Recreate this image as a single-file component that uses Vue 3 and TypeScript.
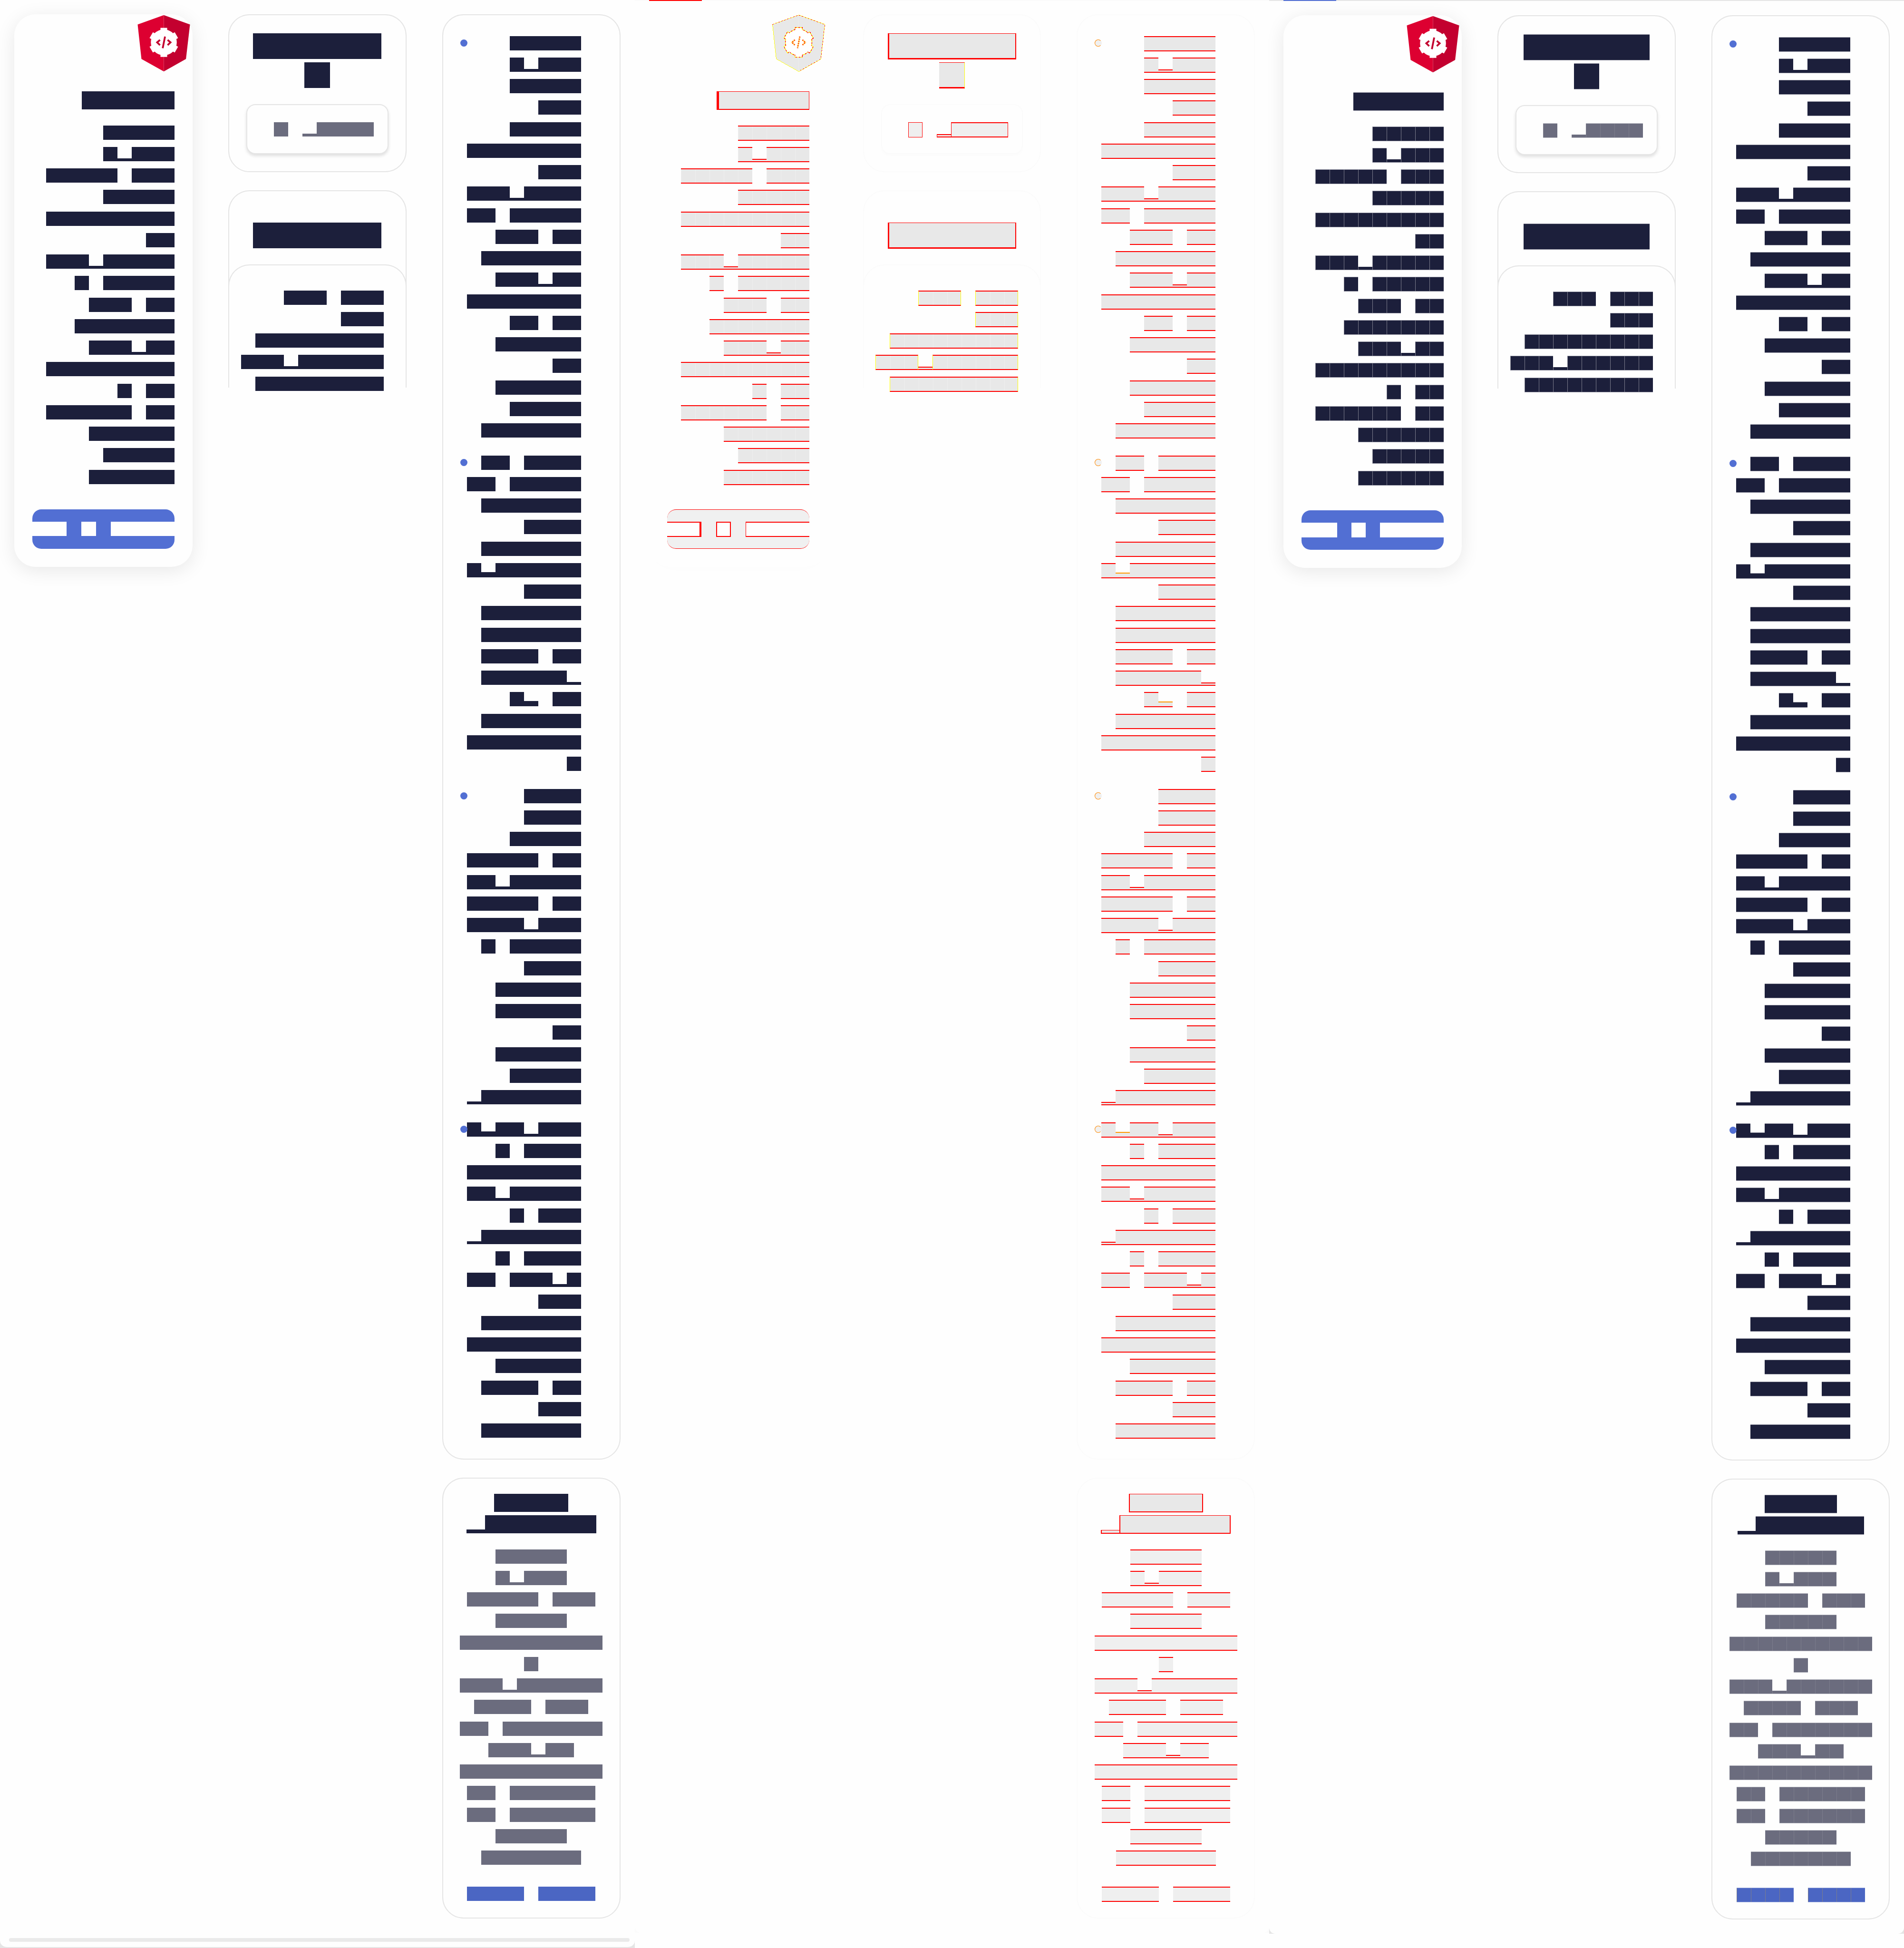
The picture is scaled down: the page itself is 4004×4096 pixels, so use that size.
<script setup lang="ts">
import { h } from 'vue'
import type { FunctionalComponent } from 'vue'

type Variant = 'before' | 'diff' | 'after'

interface Run {
  kind: 'full' | 'low' | 'mid' | 'space'
  count: number
}

const variants: Variant[] = ['before', 'diff', 'after']

// Glyph codes: X = full em box, p = low bar, c = taller bar, blank = empty em.
const kinds: Record<string, Run['kind']> = { X: 'full', p: 'low', c: 'mid', ' ': 'space' }

function toRuns(line: string): Run[] {
  return (line.match(/X+|p+|c+| +/g) ?? []).map((part) => ({
    kind: kinds[part[0]],
    count: part.length,
  }))
}

const BlockLines: FunctionalComponent<{ lines: string[] }> = (props) =>
  h(
    'span',
    { class: 'lines' },
    props.lines.map((line) =>
      h(
        'span',
        { class: 'line' },
        toRuns(line).map((run) => h('span', { class: ['run', run.kind], style: { '--n': run.count } })),
      ),
    ),
  )
BlockLines.props = ['lines']

const intro: string[] = [
  'XXXXX', 'XpXXX', 'XXXXX XXX', 'XXXXX', 'XXXXXXXXX', 'XX', 'XXXpXXXXX', 'X XXXXX', 'XXX XX',
  'XXXXXXX', 'XXXpXX', 'XXXXXXXXX', 'X XX', 'XXXXXX XX', 'XXXXXX', 'XXXXX', 'XXXXXX',
]

const nested: string[] = ['XXX XXX', 'XXX', 'XXXXXXXXX', 'XXXpXXXXXX', 'XXXXXXXXX']

const items: string[][] = [
  [
    'XXXXX', 'XpXXX', 'XXXXX', 'XXX', 'XXXXX', 'XXXXXXXX', 'XXX', 'XXXpXXXX', 'XX XXXXX', 'XXX XX',
    'XXXXXXX', 'XXXpXX', 'XXXXXXXX', 'XX XX', 'XXXXXX', 'XX', 'XXXXXX', 'XXXXX', 'XXXXXXX',
  ],
  [
    'XX XXXX', 'XX XXXXX', 'XXXXXXX', 'XXXX', 'XXXXXXX', 'XcXXXXXX', 'XXXX', 'XXXXXXX', 'XXXXXXX',
    'XXXX XX', 'XXXXXXp', 'Xc XX', 'XXXXXXX', 'XXXXXXXX', 'X',
  ],
  [
    'XXXX', 'XXXX', 'XXXXX', 'XXXXX XX', 'XXpXXXXX', 'XXXXX XX', 'XXXXpXXX', 'X XXXXX', 'XXXX',
    'XXXXXX', 'XXXXXX', 'XX', 'XXXXXX', 'XXXXX', 'pXXXXXXX',
  ],
  [
    'XcXXpXXX', 'X XXXX', 'XXXXXXXX', 'XXpXXXXX', 'X XXX', 'pXXXXXXX', 'X XXXX', 'XX XXXpX', 'XXX',
    'XXXXXXX', 'XXXXXXXX', 'XXXXXX', 'XXXX XX', 'XXX', 'XXXXXXX',
  ],
]

const summary: string[] = [
  'XXXXX', 'XpXXX', 'XXXXX XXX', 'XXXXX', 'XXXXXXXXXX', 'X', 'XXXpXXXXXX', 'XXXX XXX', 'XX XXXXXXX',
  'XXXpXX', 'XXXXXXXXXX', 'XX XXXXXX', 'XX XXXXXX', 'XXXXX', 'XXXXXXX',
]
</script>

<template>
  <main class="board">
    <section v-for="variant in variants" :key="variant" class="panel" :class="variant">
      <div class="sheet">
        <div class="tabline"><span class="tab"></span></div>
        <div class="columns">
          <div class="column">
            <article class="card feature">
              <svg class="logo" viewBox="0 0 118 127" aria-hidden="true">
                <path class="shield-left" d="M59 0.5 0.5 21.500 9 98.500 59 126.500z" />
                <path class="shield-right" d="M59 0.5 117.500 21.500 108.500 98.500 59 126.500z" />
                <template v-if="variant === 'diff'">
                  <path class="edge" d="M59 0.5 117.500 21.500 108.500 98.500 59 126.500 9 98.500 0.5 21.500z" />
                  <path class="edge dash" d="M0.5 21.500 59 0.5 117.500 21.500 108.500 98.500 59 126.500" />
                  <g class="gear-edge">
                    <circle cx="59" cy="61.500" r="29" />
                    <rect v-for="a in [0, 60, 120]" :key="a" x="51.500" y="29" width="15" height="65" :transform="`rotate(${a} 59 61.500)`" />
                  </g>
                  <g class="gear-edge dash">
                    <circle cx="59" cy="61.500" r="29" />
                    <rect v-for="a in [0, 60, 120]" :key="a" x="51.500" y="29" width="15" height="65" :transform="`rotate(${a} 59 61.500)`" />
                  </g>
                </template>
                <g class="gear">
                  <circle cx="59" cy="61.500" r="29" />
                  <rect v-for="a in [0, 60, 120]" :key="a" x="51.500" y="29" width="15" height="65" :transform="`rotate(${a} 59 61.500)`" />
                </g>
                <g class="code">
                  <path d="M50.500 56 44 61.500 50.500 67.500" />
                  <path d="M67.500 56 74 61.500 67.500 67.500" />
                  <path d="M61.700 48.500 56.500 74.500" />
                </g>
                <g v-if="variant === 'diff'" class="code dash">
                  <path d="M50.500 56 44 61.500 50.500 67.500" />
                  <path d="M67.500 56 74 61.500 67.500 67.500" />
                  <path d="M61.700 48.500 56.500 74.500" />
                </g>
              </svg>
              <h2 class="title"><BlockLines :lines="['XXXXX']" /></h2>
              <p class="text seams"><BlockLines :lines="intro" /></p>
              <button type="button" class="action" aria-label="Open">
                <BlockLines :lines="['XXX X XXXXX']" />
              </button>
            </article>
          </div>

          <div class="column">
            <article class="card picker">
              <h2 class="hero"><BlockLines :lines="['XXXXX', 'X']" /></h2>
              <button type="button" class="field seams" aria-label="Choose">
                <BlockLines :lines="['X pXXXX']" />
              </button>
            </article>
            <article class="card stack">
              <h2 class="hero"><BlockLines :lines="['XXXXX']" /></h2>
              <div class="nested seams"><BlockLines :lines="nested" /></div>
            </article>
          </div>

          <div class="column">
            <article class="card listing">
              <ul>
                <li v-for="(item, i) in items" :key="i"><BlockLines :lines="item" /></li>
              </ul>
            </article>
            <article class="card summary">
              <h2 class="title"><BlockLines :lines="['XXXX', 'pXXXXXX']" /></h2>
              <p class="text seams"><BlockLines :lines="summary" /></p>
              <a href="#more" class="more seams" aria-label="More"><BlockLines :lines="['XXXX XXXX']" /></a>
            </article>
          </div>
        </div>
        <div v-if="variant === 'before'" class="scrollbar"></div>
      </div>
    </section>
  </main>
</template>

<style>
body {
  margin: 0;
  background: #fefefe;
}
</style>

<style scoped>
.board {
  display: flex;
  align-items: flex-start;
  min-height: 100vh;
  overflow: hidden;
  font-family: "Liberation Sans", sans-serif;
}

.panel {
  --ink: #1c1f3b;
  --muted: #6b6c7e;
  --link: #4b66c3;
  --accent: #526fd3;
  --line: #e5e5e5;
  --edge: #e5e5e5;
  --em: 30px;
  --gh: 30px;
  --low: 6px;
  --mid: 11px;
  --title: 39px;
  --hero: 54px;
  flex: 1 1 0;
  min-width: 0;
  background: var(--edge);
}

.panel.diff {
  --ink: #e8e8e8;
  --muted: #efefef;
  --link: #efefef;
  --accent: #f0f0f0;
  --line: #fbfbfb;
  --edge: #fbfbfb;
  --gh: 32px;
  --low: 7px;
  --mid: 12px;
}

.panel.after {
  --gh: 31px;
  --low: 7px;
  --mid: 12px;
  --title: 38px;
  --hero: 53px;
}

.sheet {
  position: relative;
  display: flex;
  flex-direction: column;
  background: #fefefe;
  border-radius: 0 0 13px 13px;
}

.before .sheet {
  box-sizing: border-box;
  min-height: 100vh;
  border-bottom: 2px solid var(--edge);
  border-radius: 0 0 15px 15px;
}

.tabline {
  display: none;
}

.diff .tabline,
.after .tabline {
  display: block;
  height: 2px;
  background: var(--edge);
}

.diff .tabline {
  position: absolute;
  top: 0;
  left: 0;
  right: 0;
}

.tab {
  display: block;
  width: 111px;
  height: 2px;
  margin-left: 30px;
  background: #526fd3;
}

.diff .tab {
  background: #f00;
}

.columns {
  display: flex;
  align-items: flex-start;
  gap: 75px;
  padding: 30px;
}

.before .columns {
  padding-bottom: 0;
}

.column {
  display: flex;
  flex: 1 1 0;
  flex-direction: column;
  gap: 38px;
  min-width: 0;
}

.card {
  position: relative;
  box-sizing: border-box;
  display: flex;
  flex-direction: column;
  border: 2px solid var(--line);
  border-radius: 45px;
  background: #fefefe;
}

.card h2,
.card p,
.card ul {
  margin: 0;
  padding: 0;
}

/* Block text */
:deep(.lines) {
  display: flex;
  flex-direction: column;
}

:deep(.line) {
  display: flex;
  align-items: flex-end;
  justify-content: flex-end;
  height: var(--gh);
  margin-top: 8px;
  margin-bottom: calc(37px - var(--gh));
}

:deep(.line:nth-child(4n)) {
  margin-bottom: calc(38px - var(--gh));
}

:deep(.run) {
  box-sizing: border-box;
  flex: none;
  width: calc(var(--n) * var(--em));
  height: 100%;
  background-color: var(--ink);
  background-clip: padding-box;
}

:deep(.run.low) {
  height: var(--low);
}

:deep(.run.mid) {
  height: var(--mid);
}

:deep(.run.space) {
  background: none;
}

.diff :deep(.run:not(.space)) {
  border: 0 solid #f00;
  border-width: 2px 0;
}

.diff :deep(.run.mid) {
  border-top-color: #f90;
}

.after :deep(.run:not(.space)) {
  border: 0 solid color-mix(in srgb, var(--ink) 45%, white);
  border-width: 1px 0;
}

.after :deep(.run.low) {
  border-top-width: 0;
}

.after .seams :deep(.run:not(.space)) {
  background-image: repeating-linear-gradient(90deg, #7c7d8c 0 1px, transparent 1px 30px);
}

.diff .seams :deep(.run:not(.space)) {
  background-image: repeating-linear-gradient(90deg, #eee 0 1px, transparent 1px 30px);
}

/* Headings */
.title {
  --em: var(--title);
  --gh: 38px;
  --low: 8px;
}

.after .title,
.diff .title {
  --gh: 39px;
}

.title :deep(.line) {
  margin: 0 0 calc(45px - var(--gh));
}

.title :deep(.line:last-child) {
  margin-bottom: calc(38px - var(--gh));
}

.hero {
  --em: var(--hero);
  --gh: 54px;
}

.after .hero,
.diff .hero {
  --gh: 55px;
}

.hero :deep(.line) {
  justify-content: center;
  margin: 0 0 calc(61px - var(--gh));
}

.hero :deep(.line:last-child) {
  margin-bottom: calc(54px - var(--gh));
}

.diff .title :deep(.run:not(.space)),
.diff .hero :deep(.run:not(.space)) {
  border-width: 1px 2px 3px 3px;
}

.diff .feature .title :deep(.run) {
  border-width: 1px 1px 2px 5px;
}

.diff .hero :deep(.line:nth-child(2) .run) {
  border-width: 1px 1px 3px 0;
  border-right-color: #ff0;
}

.diff .summary .title :deep(.run) {
  border-width: 1px 2px 2px 2px;
}

.diff .summary .title :deep(.run.low) {
  border-right-width: 0;
}

/* Feature card */
.card.feature {
  padding: 162px 38px 38px;
  border: 0;
  box-shadow: 0 8px 40px rgba(0, 0, 0, 0.09);
}

.diff .card.feature {
  box-shadow: 0 8px 40px rgba(0, 0, 0, 0.008);
}

.logo {
  position: absolute;
  top: 1px;
  right: 5px;
  width: 111px;
  height: 120px;
}

.shield-left {
  fill: #dd0031;
}

.shield-right {
  fill: #c3002f;
}

.gear {
  fill: #fff;
}

.code {
  fill: none;
  stroke: #c3002f;
  stroke-width: 4;
}

.diff .shield-left,
.diff .shield-right {
  fill: #e8e8e8;
}

.edge,
.gear-edge {
  fill: none;
  stroke: #ff0;
  stroke-width: 1;
  shape-rendering: crispEdges;
}

.gear-edge {
  stroke-width: 3;
}

.edge.dash,
.gear-edge.dash {
  stroke: #f00;
  stroke-dasharray: 3 4;
}

.diff .code {
  stroke: #fd6;
  stroke-width: 3;
}

.diff .code.dash {
  stroke: #f30;
  stroke-dasharray: 2 3;
}

.feature .text {
  margin-top: 26px;
}

.action {
  --ink: #fefefe;
  --em: 31px;
  display: flex;
  justify-content: center;
  height: 83px;
  margin: 46px 0 0;
  padding: 18px 0 0;
  border: 0;
  border-radius: 19px;
  background: var(--accent);
  overflow: hidden;
}

.after .action {
  --em: 30px;
}

.action :deep(.run:not(.space)) {
  border-width: 0;
}

.diff .action {
  border: 1px solid #f00;
  border-left: 0;
  border-right: 0;
  padding-top: 17px;
}

.diff .action :deep(.run:not(.space)) {
  border-width: 2px;
}

.diff .action :deep(.run:first-child) {
  border-right-width: 4px;
}

.diff .action :deep(.run:last-child) {
  border-left-width: 1px;
}

/* Picker card */
.picker {
  padding: 38px 36px 36px;
}

.field {
  --ink: var(--muted);
  box-sizing: border-box;
  display: flex;
  align-items: flex-start;
  justify-content: flex-end;
  height: 105px;
  margin: 34px 0 0;
  padding: 28px 29px 0 0;
  border: 2px solid var(--line);
  border-radius: 19px;
  background: #fefefe;
  box-shadow: 0 4px 6px rgba(0, 0, 0, 0.12);
}

.diff .field {
  box-shadow: 0 4px 6px rgba(0, 0, 0, 0.01);
}

.diff .field :deep(.run.full:first-child) {
  border-width: 1px;
}

.diff .field :deep(.run.low) {
  border-left-width: 1px;
}

.diff .field :deep(.run.full:last-child) {
  border-width: 2px 1px;
}

/* Stacked card */
.stack {
  padding-top: 66px;
  border-bottom: 0;
  border-radius: 45px 45px 0 0;
}

.nested {
  margin: 34px -2px 0;
  padding: 45px 46px 0;
  border: 2px solid var(--line);
  border-bottom: 0;
  border-radius: 45px 45px 0 0;
  background: #fefefe;
}

.nested :deep(.lines) {
  margin-bottom: -14px;
}

.diff .nested :deep(.run.full) {
  border-right: 1px solid #ff0;
  border-left: 1px solid #ff0;
}

/* List card */
.listing {
  padding: 36px 81px 37px 36px;
}

.listing ul {
  display: flex;
  flex-direction: column;
  gap: 23px;
  list-style: none;
}

.listing li {
  position: relative;
}

.listing li::before {
  content: "";
  position: absolute;
  top: 15px;
  left: 0;
  box-sizing: border-box;
  width: 15px;
  height: 15px;
  border-radius: 50%;
  background: #526fd3;
  z-index: 1;
}

.diff .listing li::before {
  border: 1px solid #f80;
  border-right-color: transparent;
  background: #f0f0f0;
}

/* Summary card */
.summary {
  padding: 32px 36px 28px;
}

.summary :deep(.line) {
  justify-content: center;
}

.summary .text {
  --ink: var(--muted);
  margin-top: 26px;
}

.more {
  --ink: var(--link);
  display: block;
  margin-top: 31px;
  text-decoration: none;
}

.scrollbar {
  height: 8px;
  margin: auto 11px 11px 19px;
  border-radius: 4px;
  background: #eaeaea;
}
</style>
